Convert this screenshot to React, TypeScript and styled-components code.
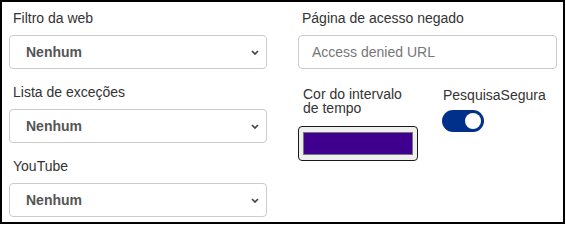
import React from "react";
import styled, { createGlobalStyle } from "styled-components";

const Global = createGlobalStyle`
  html, body { margin: 0; padding: 0; background: #fff; }
  body { font-family: "Liberation Sans", Arial, sans-serif; }
`;

const Frame = styled.div`
  width: 565px;
  height: 224px;
  box-sizing: border-box;
  border: 2px solid #000;
  padding: 8px 0 0 7px;
  display: grid;
  grid-template-columns: 258px 259px;
  column-gap: 31px;
  align-items: start;
`;

const Column = styled.div`
  display: flex;
  flex-direction: column;
  gap: 15px;
`;

const Field = styled.div`
  display: flex;
  flex-direction: column;
`;

const Label = styled.label<{ $tight?: boolean }>`
  font-size: 14px;
  line-height: ${(p) => (p.$tight ? "14px" : "16px")};
  color: #333;
  padding-left: ${(p) => (p.$tight ? "5px" : "4px")};
  margin-bottom: ${(p) => (p.$tight ? "11px" : "9px")};
`;

const SelectWrap = styled.div`
  position: relative;
  height: 34px;
`;

const Select = styled.select`
  appearance: none;
  -webkit-appearance: none;
  width: 100%;
  height: 100%;
  box-sizing: border-box;
  border: 1px solid #ccc;
  border-radius: 4px;
  background: #fff;
  padding: 0 0 0 16px;
  font-family: "Liberation Sans", Arial, sans-serif;
  font-size: 14px;
  font-weight: bold;
  color: #555;
  outline: none;
`;

const Chevron = styled.svg`
  position: absolute;
  right: 8px;
  top: 15px;
  pointer-events: none;
`;

const TextInput = styled.input`
  height: 34px;
  box-sizing: border-box;
  width: 100%;
  border: 1px solid #ccc;
  border-radius: 4px;
  padding: 0 0 0 13px;
  font-family: "Liberation Sans", Arial, sans-serif;
  font-size: 14px;
  color: #333;
  outline: none;
  &::placeholder { color: #777; }
`;

const Row = styled.div`
  display: flex;
  gap: 25px;
  margin-top: 3px;
`;

const ColorField = styled.div`
  width: 120px;
  display: flex;
  flex-direction: column;
`;

const ColorBox = styled.div`
  width: 120px;
  height: 35px;
  box-sizing: border-box;
  border: 1px solid #1a1a1a;
  border-radius: 4px;
  background: #efefef;
  padding: 5px 4px;
`;

const Swatch = styled.div<{ $color: string }>`
  height: 100%;
  box-sizing: border-box;
  border: 1px solid #767676;
  background: ${(p) => p.$color};
`;

const SwitchField = styled.div`
  display: flex;
  flex-direction: column;
`;

const SwitchLabel = styled.span`
  font-size: 14px;
  line-height: 16px;
  color: #333;
  margin-bottom: 7px;
`;

const Track = styled.div<{ $on: boolean }>`
  width: 42px;
  height: 22px;
  border-radius: 11px;
  background: ${(p) => (p.$on ? "#00308a" : "#ccc")};
  display: flex;
  align-items: center;
  justify-content: ${(p) => (p.$on ? "flex-end" : "flex-start")};
  padding: 0 3px;
  box-sizing: border-box;
  margin-left: -1px;
`;

const Knob = styled.div`
  width: 16px;
  height: 16px;
  border-radius: 50%;
  background: #fff;
`;

const ChevronIcon = () => (
  <Chevron width="8" height="5" viewBox="0 0 8 5">
    <path d="M1 1 L4 4 L7 1" fill="none" stroke="#444" strokeWidth="1.7" />
  </Chevron>
);

const Dropdown = ({ label }: { label: string }) => (
  <Field>
    <Label>{label}</Label>
    <SelectWrap>
      <Select defaultValue="none">
        <option value="none">Nenhum</option>
      </Select>
      <ChevronIcon />
    </SelectWrap>
  </Field>
);

export default function App() {
  return (
    <>
      <Global />
      <Frame>
        <Column>
          <Dropdown label="Filtro da web" />
          <Dropdown label="Lista de exceções" />
          <Dropdown label="YouTube" />
        </Column>
        <Column>
          <Field>
            <Label>Página de acesso negado</Label>
            <TextInput placeholder="Access denied URL" />
          </Field>
          <Row>
            <ColorField>
              <Label $tight>Cor do intervalo de tempo</Label>
              <ColorBox>
                <Swatch $color="#3f008f" />
              </ColorBox>
            </ColorField>
            <SwitchField>
              <SwitchLabel>PesquisaSegura</SwitchLabel>
              <Track $on>
                <Knob />
              </Track>
            </SwitchField>
          </Row>
        </Column>
      </Frame>
    </>
  );
}
